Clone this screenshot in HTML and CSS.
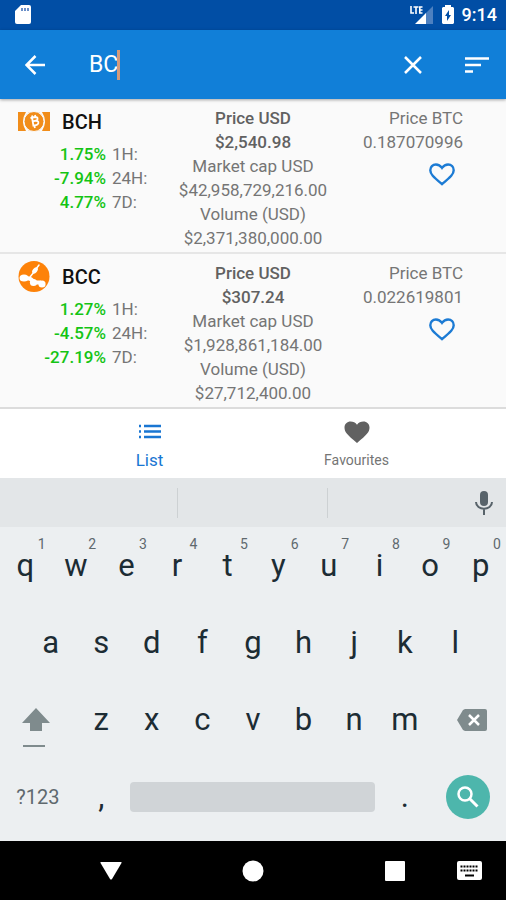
FILE: index.html
```html
<!DOCTYPE html>
<html lang="en">
<head>
<meta charset="utf-8">
<meta name="viewport" content="width=device-width, initial-scale=1">
<title>Coins</title>
<link rel="stylesheet" href="styles.css">
</head>
<body>
<div class="screen">
  <div class="status">
    <svg class="sd" width="16" height="20" viewBox="0 0 16 20"><path fill="#fff" d="M6 0h8a2 2 0 0 1 2 2v15a2 2 0 0 1-2 2H2a2 2 0 0 1-2-2V6z"/><path stroke="#6a8fc8" stroke-width="2" d="M7 3v3M10 3v3M13 3v3"/></svg>
    <div class="status-right">
      <svg width="24" height="20" viewBox="0 0 24 20"><path fill="#4d80c0" d="M23 1v18h-8V9z"/><path fill="#fff" d="M16 8v11H5z"/><path fill="none" stroke="#fff" stroke-width="1.600" d="M1 1v7h3M3.500 2h5M6 2v7M12.500 2H9.800v6h2.700M9.500 5h3"/></svg>
      <svg width="12" height="20" viewBox="0 0 12 20"><path fill="#fff" d="M3 0h6v2h2l1 1v15l-1 1H1l-1-1V3l1-1h2z"/><path fill="#014ea5" d="M7 5v5h2l-4 6v-5H3z"/></svg>
      <span class="clock">9:14</span>
    </div>
  </div>

  <header class="appbar">
    <button class="icon-btn" aria-label="Back"><svg width="20" height="20" viewBox="0 0 20 20"><path fill="none" stroke="#fff" stroke-width="2.500" d="M20 10H2M10.500 1L1.500 10l9 9"/></svg></button>
    <div class="search">
      <input class="search-input" type="text" value="BC" aria-label="Search coins">
      <span class="caret"></span>
    </div>
    <button class="icon-btn" aria-label="Clear"><svg width="18" height="18" viewBox="0 0 18 18"><path stroke="#fff" stroke-width="2.500" d="M1 1l16 16M17 1L1 17"/></svg></button>
    <button class="icon-btn sort" aria-label="Sort"><svg width="24" height="16" viewBox="0 0 24 16"><path stroke="#fff" stroke-width="2.600" d="M0 1.500h24M0 8h16M0 14.500h8"/></svg></button>
  </header>

  <main class="coins">
    <article class="coin">
      <div class="coin-name">
        <svg class="logo" width="32" height="32" viewBox="0 0 32 32"><path fill="#f18d1a" d="M0 6h32v19H0z"/><path fill="#fafafa" d="M8 6q-6 9.500 0 19h3q-6-9.500 0-19zM24 6q6 9.500 0 19h-3q6-9.500 0-19z"/><circle cx="16" cy="15.500" r="10" fill="#f18d1a" stroke="#fafafa"/><path fill="none" stroke="#fff" stroke-width="1.800" d="M12.500 12l4.500-1q3 0 2.500 2.200-.5 1.600-4 2M17 14.800q4-.3 3.300 2.400-.6 2.300-5.800 2.300M14 11.500l1.500 8.500M14 9.500l.4 2M17 9l.4 2M16.500 20l.4 2"/></svg>
        <h2>BCH</h2>
      </div>
      <dl class="changes">
        <dd>1.75%</dd><dt>1H:</dt>
        <dd>-7.94%</dd><dt>24H:</dt>
        <dd>4.77%</dd><dt>7D:</dt>
      </dl>
      <div class="usd">
        <b>Price USD</b><b>$2,540.98</b>
        <span>Market cap USD</span><span>$42,958,729,216.00</span>
        <span>Volume (USD)</span><span>$2,371,380,000.00</span>
      </div>
      <div class="btc">
        <span>Price BTC</span><span>0.187070996</span>
        <button class="fav" aria-label="Add BCH to favourites"><svg width="26" height="23" viewBox="0 0 26 23"><path fill="none" stroke="#1c7bd4" stroke-width="2.400" d="M13 21.200C4 13.500 1.300 11 1.300 7.200 1.300 4 3.700 1.500 6.900 1.500c2.400 0 4.600 1.400 6.100 3.400 1.500-2 3.700-3.400 6.100-3.400 3.200 0 5.600 2.500 5.600 5.700 0 3.800-2.700 6.300-11.700 14z"/></svg></button>
      </div>
    </article>
    <article class="coin">
      <div class="coin-name">
        <svg class="logo" width="32" height="32" viewBox="0 0 32 32"><circle cx="16" cy="15.500" r="15.500" fill="#fd8209"/><path fill="none" stroke="#fff" stroke-width="1.500" stroke-linecap="round" d="M21 4l-3 4"/><ellipse cx="17" cy="9.500" rx="3.500" ry="2.200" transform="rotate(-50 17 9.500)" fill="#fff"/><path fill="none" stroke="#fff" stroke-width="1.500" d="M16 11l-4 5"/><ellipse cx="6" cy="17" rx="4.500" ry="3.600" fill="#fff"/><path fill="none" stroke="#fff" stroke-width="4" d="M7 17.500q6-1 9 4h7"/><circle cx="15.500" cy="21.500" r="3.600" fill="#fff"/><circle cx="24" cy="23" r="3.600" fill="#fff"/></svg>
        <h2>BCC</h2>
      </div>
      <dl class="changes">
        <dd>1.27%</dd><dt>1H:</dt>
        <dd>-4.57%</dd><dt>24H:</dt>
        <dd>-27.19%</dd><dt>7D:</dt>
      </dl>
      <div class="usd">
        <b>Price USD</b><b>$307.24</b>
        <span>Market cap USD</span><span>$1,928,861,184.00</span>
        <span>Volume (USD)</span><span>$27,712,400.00</span>
      </div>
      <div class="btc">
        <span>Price BTC</span><span>0.022619801</span>
        <button class="fav" aria-label="Add BCC to favourites"><svg width="26" height="23" viewBox="0 0 26 23"><path fill="none" stroke="#1c7bd4" stroke-width="2.400" d="M13 21.200C4 13.500 1.300 11 1.300 7.200 1.300 4 3.700 1.500 6.900 1.500c2.400 0 4.600 1.400 6.100 3.400 1.500-2 3.700-3.400 6.100-3.400 3.200 0 5.600 2.500 5.600 5.700 0 3.800-2.700 6.300-11.700 14z"/></svg></button>
      </div>
    </article>
  </main>

  <nav class="tabs">
    <a class="tab active" href="#list"><svg width="24" height="24" viewBox="0 0 24 24"><path stroke="#1976d2" stroke-width="2.400" d="M1 6h2M6 6h17M1 11.500h2M6 11.500h17M1 17h2M6 17h17"/></svg>List</a>
    <a class="tab" href="#favourites"><svg width="26" height="24" viewBox="0 0 26 24"><path fill="#616161" d="M13 23C3 14.500.5 12 .5 7.500.5 4 3.200 1.500 6.600 1.500c2.500 0 5 1.200 6.400 3.200 1.400-2 3.900-3.200 6.400-3.200 3.400 0 6.100 2.500 6.100 6 0 4.500-2.500 7-12.500 15.500z"/></svg>Favourites</a>
  </nav>

  <section class="keyboard" aria-label="Keyboard">
    <div class="strip">
      <span></span><span></span><span></span>
      <button aria-label="Voice input"><svg width="18" height="24" viewBox="0 0 18 24"><rect x="5" y="0" width="8" height="15" rx="4" fill="#58636a"/><path fill="none" stroke="#58636a" stroke-width="2" d="M1 11c0 9 16 9 16 0M9 18v6"/></svg></button>
    </div>
    <div class="keys">
      <button class="key">q<sup>1</sup></button><button class="key">w<sup>2</sup></button><button class="key">e<sup>3</sup></button><button class="key">r<sup>4</sup></button><button class="key">t<sup>5</sup></button><button class="key">y<sup>6</sup></button><button class="key">u<sup>7</sup></button><button class="key">i<sup>8</sup></button><button class="key">o<sup>9</sup></button><button class="key">p<sup>0</sup></button>
    </div>
    <div class="keys inset">
      <button class="key">a</button><button class="key">s</button><button class="key">d</button><button class="key">f</button><button class="key">g</button><button class="key">h</button><button class="key">j</button><button class="key">k</button><button class="key">l</button>
    </div>
    <div class="keys">
      <button class="key wide shift" aria-label="Shift"><svg width="28" height="40" viewBox="0 0 28 40"><path fill="#7f8b8d" d="M14 0l14 15h-8v8H8v-8H0zM1 37h22v2H1z"/></svg></button><button class="key">z</button><button class="key">x</button><button class="key">c</button><button class="key">v</button><button class="key">b</button><button class="key">n</button><button class="key">m</button><button class="key wide delete" aria-label="Delete"><svg width="30" height="22" viewBox="0 0 30 22"><path fill="#7f8b8d" d="M8 0h20q2 0 2 2v18q0 2-2 2H8l-2-1L0 11l6-10z"/><path stroke="#fff" stroke-width="2.500" d="M12 6l10 10M22 6L12 16"/></svg></button>
    </div>
    <div class="keys">
      <button class="key wide symbols">?123</button><button class="key">,</button><button class="key space" aria-label="Space"><i></i></button><button class="key">.</button><button class="key wide" aria-label="Search"><span class="go"><svg width="22" height="22" viewBox="0 0 22 22"><circle cx="8" cy="8" r="6.500" fill="none" stroke="#fff" stroke-width="2.500"/><path stroke="#fff" stroke-width="3" d="M12.500 12.500l8 8"/></svg></span></button>
    </div>
  </section>

  <nav class="system" aria-label="System">
    <span></span>
    <button aria-label="Hide keyboard"><svg width="22" height="20" viewBox="0 0 22 20"><path fill="#fff" d="M1 1h20q1 0 .5 1L12 18q-1 1-2 0L.5 2Q0 1 1 1z"/></svg></button>
    <button aria-label="Home"><svg width="22" height="22" viewBox="0 0 22 22"><circle cx="11" cy="11" r="10.500" fill="#fff"/></svg></button>
    <button aria-label="Recent apps"><svg width="20" height="20" viewBox="0 0 20 20"><rect width="20" height="20" rx="1" fill="#fff"/></svg></button>
    <button class="switch" aria-label="Switch keyboard"><svg width="25" height="19" viewBox="0 0 25 19"><rect width="25" height="19" rx="2" fill="#fff"/><path stroke="#000" stroke-width="2" stroke-dasharray="2 1" d="M3.500 5.500h18M3.500 9.500h18"/><path stroke="#000" stroke-width="2" d="M8 14.500h9"/></svg></button>
  </nav>
</div>
</body>
</html>
```
FILE: styles.css
```css
* { box-sizing: border-box; }
body {
  margin: 0;
  font-family: Roboto, "Liberation Sans", sans-serif;
  font-size: 17px;
  line-height: 24px;
  color: #757575;
  background: #fafafa;
}
button {
  display: flex;
  align-items: center;
  justify-content: center;
  padding: 0;
  border: 0;
  background: none;
  font: inherit;
  color: inherit;
}
svg { display: block; flex: none; }
.screen { display: flex; flex-direction: column; min-height: 100vh; }

.status {
  display: flex;
  align-items: center;
  justify-content: space-between;
  height: 30px;
  padding: 0 9px 0 15px;
  background: #014ea5;
}
.status-right { display: flex; align-items: center; gap: 8px; }
.clock { color: #fff; font-size: 18px; font-weight: 500; }

.appbar {
  position: relative;
  display: flex;
  align-items: center;
  height: 69px;
  padding: 0 5px 0 11px;
  background: #117fd8;
  box-shadow: 0 1px 3px rgba(0, 0, 0, .35);
}
.icon-btn { width: 48px; height: 48px; }
.sort { margin-left: 16px; }
.search { display: flex; flex: 1; align-items: center; padding-left: 30px; }
.search-input {
  width: 28px;
  padding: 0;
  border: 0;
  outline: 0;
  background: none;
  font: 23px/30px Roboto, "Liberation Sans", sans-serif;
  color: #fff;
}
.caret { width: 3px; height: 30px; background: #d49a7b; }

.coin {
  display: grid;
  grid-template-columns: 167px 1fr 167px;
  grid-template-rows: 36px 1fr;
  height: 155px;
  padding-top: 7px;
  border-bottom: 2px solid #e6e6e6;
}
.coin:last-child { border-bottom-color: #dcdcdc; }
.coin-name { display: flex; align-items: center; gap: 12px; height: 32px; padding-left: 18px; }
h2 { margin: 0; font-size: 20px; font-weight: 500; color: #111; }
.changes {
  display: grid;
  grid-template-columns: 106px 1fr;
  grid-auto-rows: 24px;
  column-gap: 6px;
  margin: 0;
  grid-row: 2;
}
.changes dd { margin: 0; text-align: right; font-weight: 500; color: #14c414; }
.usd, .btc { display: flex; flex-direction: column; grid-row: 1 / 3; }
.usd { grid-column: 2; align-items: center; white-space: nowrap; }
.usd b { font-weight: 500; color: #616161; }
.btc { grid-column: 3; align-items: flex-end; padding-right: 43px; }
.fav { width: 42px; height: 40px; }

.tabs {
  display: flex;
  justify-content: center;
  height: 69px;
  padding-top: 11px;
  background: #fff;
}
.tab {
  display: flex;
  flex-direction: column;
  align-items: center;
  gap: 4px;
  flex: 0 1 207px;
  font-size: 14px;
  color: #757575;
  text-decoration: none;
}
.tab.active { font-size: 17px; color: #1976d2; }

.keyboard { padding-bottom: 6px; background: #eceff1; }
.strip {
  display: grid;
  grid-template-columns: 178px 150px 1fr 44px;
  align-items: center;
  height: 49px;
  background: #e3e6e8;
}
.strip span { height: 30px; border-right: 1px solid #cdd1d3; }
.strip span:nth-child(3) { border: 0; }
.keys { display: flex; height: 77px; }
.inset { padding: 0 5%; }
.key {
  position: relative;
  flex: 0 0 10%;
  font-size: 31px;
  line-height: 36px;
  color: #1c2c34;
}
.inset .key { flex: 1; }
.key sup {
  position: absolute;
  top: 9px;
  right: 5px;
  font-size: 14px;
  line-height: 16px;
  color: #5f696e;
}
.key.wide { flex-basis: 15%; }
.key.shift { padding: 16px 4px 0 0; }
.key.delete { padding-left: 8px; }
.key.symbols { font-size: 20px; color: #5f696e; }
.key.space { flex-basis: 50%; padding: 0 4px; }
.space i { flex: 1; height: 30px; border-radius: 4px; background: #d0d4d7; }
.go {
  display: flex;
  align-items: center;
  justify-content: center;
  width: 44px;
  height: 44px;
  border-radius: 50%;
  background: #4db6ac;
}

.system {
  display: grid;
  grid-template-columns: minmax(0, 1fr) 142px 142px 142px minmax(0, 1fr);
  flex: 1;
  align-items: center;
  min-height: 58px;
  background: #000;
}
.system .switch { justify-content: flex-end; padding-right: 24px; }
```
